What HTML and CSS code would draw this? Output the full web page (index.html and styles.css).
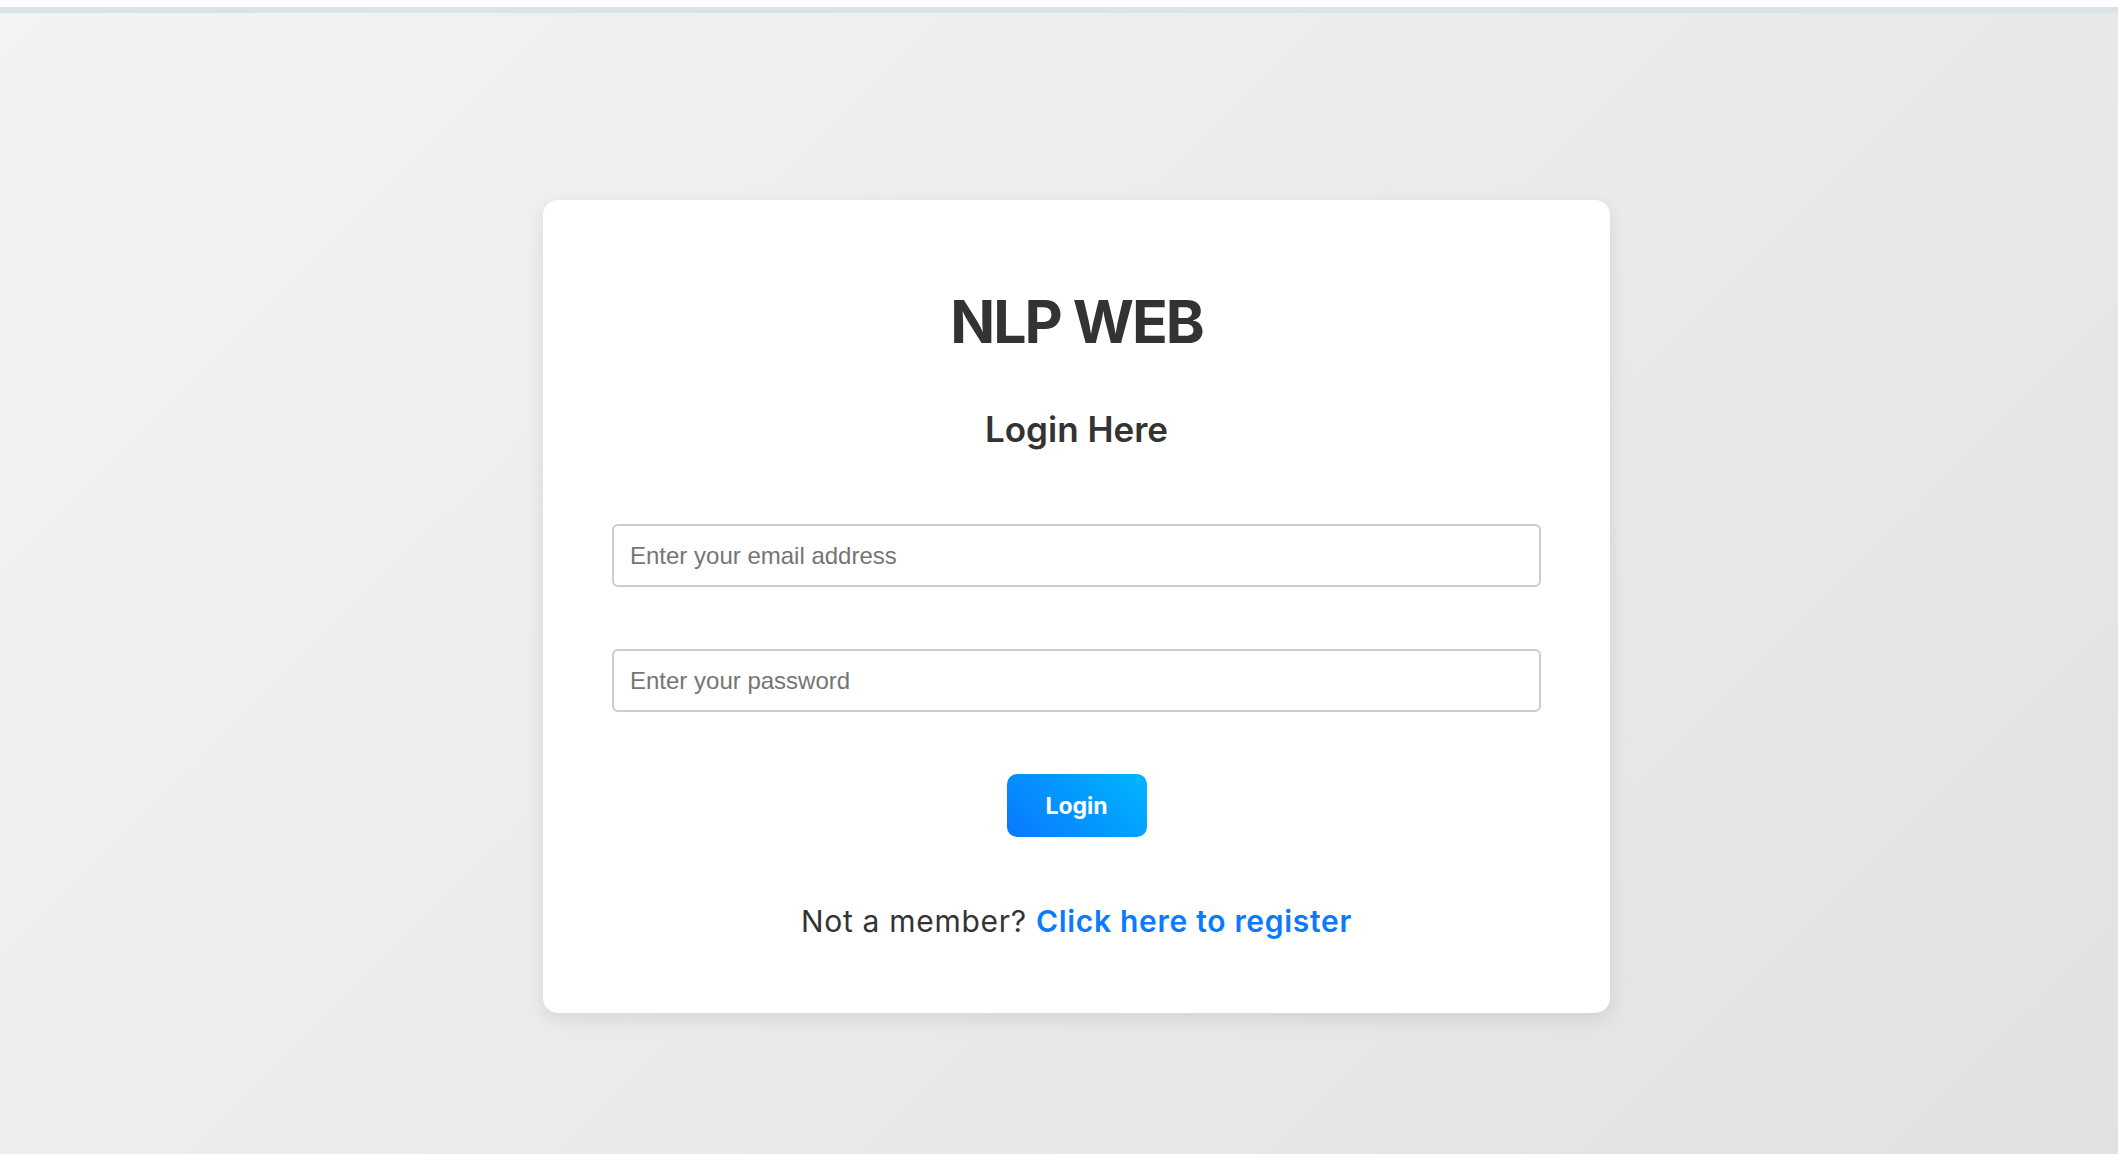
FILE: index.html
```html
<!DOCTYPE html>
<html lang="en">
<head>
<meta charset="utf-8">
<title>NLP WEB - Login</title>
<link rel="stylesheet" href="styles.css">
</head>
<body>
<div class="topbar"></div>
<main class="page">
  <section class="card">
    <h1 class="brand">NLP WEB</h1>
    <h2 class="title">Login Here</h2>
    <form class="form">
      <input class="field" type="email" placeholder="Enter your email address">
      <input class="field" type="password" placeholder="Enter your password">
      <button class="btn" type="button">Login</button>
    </form>
    <p class="note">Not a member? <a class="link" href="#">Click here to register</a></p>
  </section>
</main>
</body>
</html>
```

FILE: styles.css
```css
html, body {
  margin: 0;
  padding: 0;
  height: 100%;
}
body {
  font-family: Inter, "Noto Sans", sans-serif;
  background: linear-gradient(135deg, #f3f3f3 0%, #ebebeb 50%, #e1e1e1 100%);
  color: #333;
  overflow: hidden;
  border-top: 7px solid #ffffff;
  box-sizing: border-box;
}
.topbar {
  height: 6px;
  background: #dae3ea;
}
.page {
  display: flex;
  justify-content: center;
  padding-top: 187px;
  padding-left: 35px;
}
.card {
  width: 1067px;
  box-sizing: border-box;
  background: #fff;
  border-radius: 15px;
  box-shadow: 0 6px 18px rgba(0, 0, 0, 0.09);
  padding: 86px 69px 74px;
  display: flex;
  flex-direction: column;
  align-items: center;
}
.brand {
  margin: 0;
  font-size: 59px;
  line-height: 72px;
  font-weight: 700;
  color: #333;
  letter-spacing: -2px;
}
.title {
  margin: 51px 0 0;
  font-size: 35px;
  line-height: 41px;
  font-weight: 600;
  color: #333;
}
.form {
  width: 100%;
  display: flex;
  flex-direction: column;
  align-items: center;
  gap: 62px;
  margin-top: 74px;
}
.field {
  width: 100%;
  height: 63px;
  box-sizing: border-box;
  border: 2px solid #cccccc;
  border-radius: 6px;
  padding: 0 16px;
  font-family: "Liberation Sans", Arial, sans-serif;
  font-size: 24px;
  color: #333;
  background: #fff;
  outline: none;
}
.field::placeholder {
  color: #757575;
}
.btn {
  width: 140px;
  height: 63px;
  border: 0;
  border-radius: 10px;
  background: linear-gradient(45deg, #0878ff 0%, #00b6ff 100%);
  color: #fff;
  font-family: Inter, "Noto Sans", sans-serif;
  font-size: 23px;
  font-weight: 700;
  cursor: pointer;
}
.note {
  margin: 66px 0 0;
  font-size: 30px;
  line-height: 36px;
  font-weight: 400;
  color: #333;
  letter-spacing: 0.7px;
}
.link {
  color: #0a7bff;
  font-weight: 600;
  text-decoration: none;
}
```
